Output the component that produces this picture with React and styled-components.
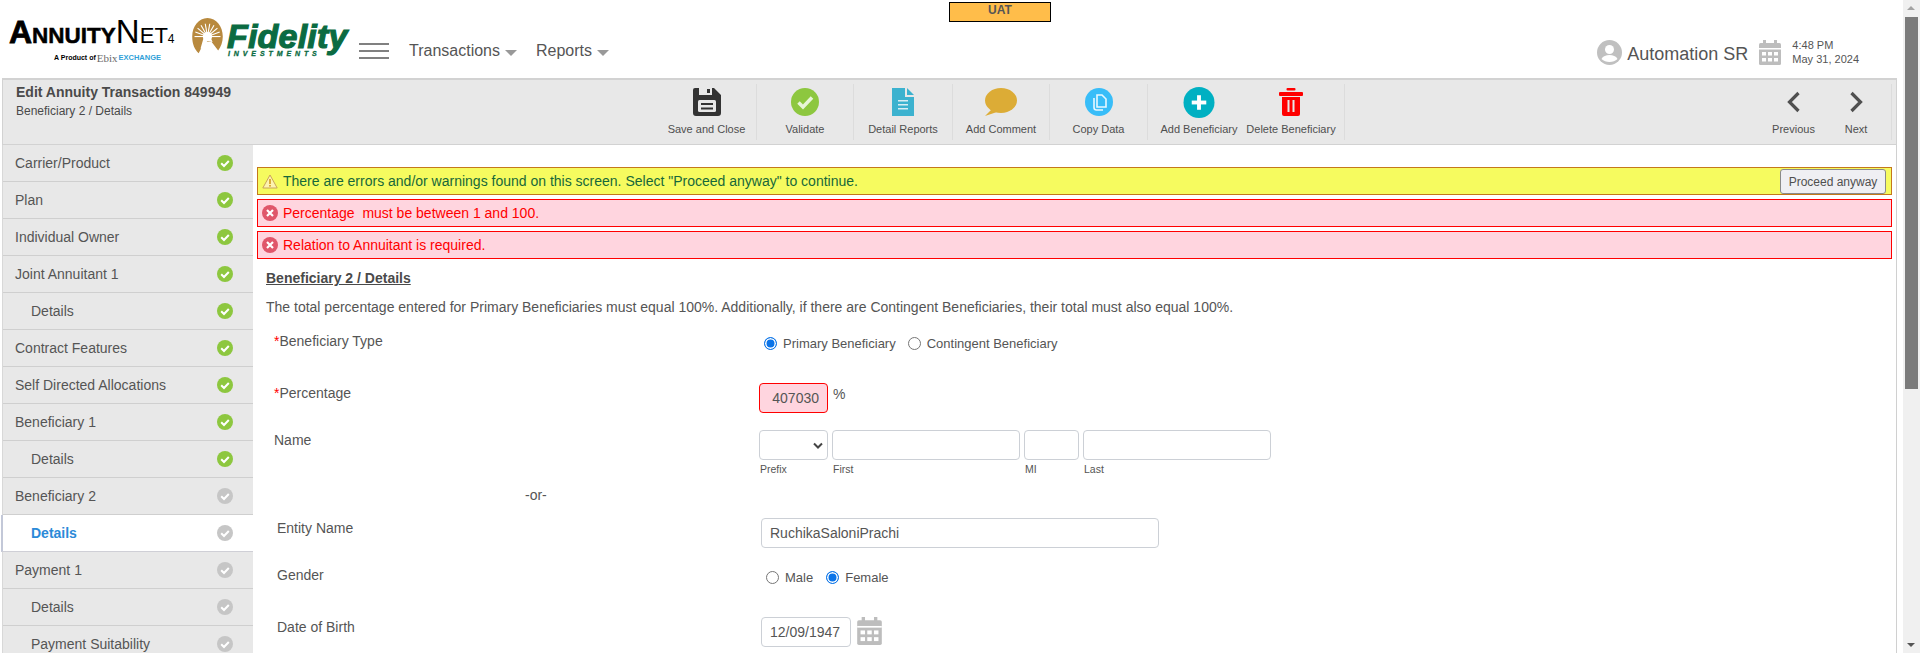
import React from "react";
import styled, { createGlobalStyle } from "styled-components";

const GlobalStyle = createGlobalStyle`
  html, body {
    margin: 0;
    padding: 0;
    background: #fff;
    overflow: hidden;
  }
  body {
    font-family: "Liberation Sans", Arial, sans-serif;
    color: #555;
  }
`;

const Page = styled.div`
  display: flex;
  height: 653px;
  overflow: hidden;
`;

const Main = styled.div`
  width: 1903px;
  flex-shrink: 0;
  display: flex;
  flex-direction: column;
  padding-left: 2px;
  box-sizing: border-box;
`;

const ScrollTrack = styled.div`
  position: relative;
  width: 17px;
  background: #f0f0f0;
`;

const ScrollThumb = styled.div`
  position: absolute;
  left: 2px;
  top: 17px;
  width: 13px;
  height: 372px;
  background: #7b7b7b;
`;

const ScrollArrow = styled.div`
  position: absolute;
  left: 4px;
  ${(p) => (p.$down ? "bottom: 6px;" : "top: 6px;")}
  width: 0;
  height: 0;
  border-left: 4px solid transparent;
  border-right: 4px solid transparent;
  ${(p) => (p.$down ? "border-top: 4px solid #555;" : "border-bottom: 4px solid #a3a3a3;")}
`;

/* header */
const Header = styled.header`
  position: relative;
  height: 78px;
  width: 1895px;
  display: flex;
  align-items: flex-start;
`;

const UatBadge = styled.div`
  position: absolute;
  left: 947px;
  top: 2px;
  width: 100px;
  height: 18px;
  border: 1px solid #000;
  background: #ffbd4a;
  font-size: 12px;
  font-weight: bold;
  line-height: 15px;
  text-align: center;
  color: #555;
`;

const AnnuityLogo = styled.div`
  width: 170px;
  margin: 16px 0 0 7px;
  flex-shrink: 0;
  color: #000;
`;

const AnnuityTitle = styled.div`
  display: flex;
  align-items: baseline;
  height: 31px;
  line-height: 31px;
  white-space: nowrap;
`;

const TitleCap = styled.span`
  font-size: ${(p) => p.$size}px;
  font-weight: ${(p) => p.$weight || 900};
  font-family: ${(p) => (p.$thin ? '"Liberation Sans Narrow", "Liberation Sans", sans-serif' : '"Liberation Sans", sans-serif')};
  letter-spacing: ${(p) => p.$ls || 0}px;
  -webkit-text-stroke: ${(p) => p.$stroke || 0}px #000;
`;

const AnnuitySub = styled.div`
  display: flex;
  align-items: center;
  margin: 4px 0 0 45px;
  gap: 1px;
  font-size: 7px;
  font-weight: bold;
  line-height: 14px;
  white-space: nowrap;
`;

const EbixText = styled.span`
  font-size: 11px;
  font-weight: normal;
  color: #6a6a6a;
  font-family: "Liberation Serif", serif;
`;

const ExchangeText = styled.span`
  font-size: 7.5px;
  font-weight: bold;
  color: #2f9fd8;
`;

const FidelityLogo = styled.div`
  display: flex;
  margin: 18px 0 0 13px;
  width: 161px;
  flex-shrink: 0;
`;

const FidelityText = styled.div`
  margin: 4px 0 0 4px;
  color: #0b6b42;
  font-style: italic;
  font-weight: bold;
  white-space: nowrap;
`;

const FidelityWord = styled.div`
  font-size: 34px;
  line-height: 28px;
  letter-spacing: 0.2px;
  -webkit-text-stroke: 1.2px #0b6b42;
`;

const FidelitySub = styled.div`
  font-size: 7px;
  line-height: 7px;
  letter-spacing: 3.9px;
  margin-left: 1px;
  -webkit-text-stroke: 0.3px #0b6b42;
`;

const Hamburger = styled.div`
  display: flex;
  flex-direction: column;
  gap: 5px;
  width: 30px;
  margin: 43px 0 0 6px;
  flex-shrink: 0;
`;

const HamburgerBar = styled.span`
  height: 2px;
  background: #808080;
`;

const NavMenu = styled.nav`
  display: flex;
  margin: 42px 0 0 20px;
  gap: 19px;
`;

const NavLink = styled.div`
  display: flex;
  align-items: center;
  gap: 5px;
  font-size: 16px;
  line-height: 18px;
  color: #555;
`;

const Caret = styled.span`
  width: 0;
  height: 0;
  margin-top: 3px;
  border-left: 6px solid transparent;
  border-right: 6px solid transparent;
  border-top: 6px solid #999;
`;

const UserArea = styled.div`
  display: flex;
  margin-left: auto;
  padding: 40px 38px 0 0;
  height: 38px;
`;

const UserName = styled.div`
  margin: 3px 0 0 5px;
  font-size: 18px;
  line-height: 22px;
  color: #555;
  white-space: nowrap;
`;

const HeaderCalendar = styled.div`
  margin-left: 11px;
`;

const TimeBlock = styled.div`
  margin: -1px 0 0 11px;
  font-size: 11px;
  line-height: 13.5px;
  color: #555;
  white-space: nowrap;
`;

/* toolbar band */
const TitleBand = styled.div`
  display: flex;
  width: 1895px;
  height: 67px;
  box-sizing: border-box;
  border: 1px solid #d2d2d2;
  border-width: 2px 1px 1px 1px;
  background: #e8e8e8;
`;

const BandTitle = styled.div`
  width: 654px;
  flex-shrink: 0;
  padding: 4px 0 0 13px;
  box-sizing: border-box;
`;

const BandHeading = styled.div`
  font-size: 14px;
  font-weight: bold;
  line-height: 17px;
  color: #4a4a4a;
`;

const BandSub = styled.div`
  margin-top: 3px;
  font-size: 12px;
  line-height: 14px;
  color: #4a4a4a;
`;

const ToolGroup = styled.div`
  display: flex;
  align-self: center;
  height: 56px;
  padding-right: ${(p) => p.$pad || 0}px;
  border-right: 1px solid #dcdcdc;
  ${(p) => p.$end && "margin-left: auto; width: 130px; margin-right: 4px;"}
`;

const ToolButton = styled.div`
  display: flex;
  flex-direction: column;
  align-items: center;
  width: ${(p) => p.$w}px;
  color: #4f4f4f;
`;

const ToolIcon = styled.div`
  height: 28px;
  margin-top: 4px;
  display: flex;
  align-items: center;
  justify-content: center;
`;

const ToolLabel = styled.div`
  margin-top: 6px;
  font-size: 11px;
  line-height: 14px;
  white-space: nowrap;
`;

/* body */
const Body = styled.div`
  display: flex;
  flex: 1;
  min-height: 0;
  width: 1895px;
  border-right: 1px solid #d0d0d0;
  box-sizing: border-box;
`;

const Sidebar = styled.aside`
  width: 251px;
  flex-shrink: 0;
  background: #e8e8e8;
  border-left: 1px solid #d8d8d8;
  box-sizing: border-box;
`;

const SideRow = styled.div`
  display: flex;
  align-items: center;
  justify-content: space-between;
  height: 37px;
  box-sizing: border-box;
  padding: 0 20px 0 ${(p) => (p.$sub ? 28 : 12)}px;
  border-bottom: 1px solid #cfcfcf;
  font-size: 14px;
  color: #555;
  ${(p) =>
    p.$active &&
    `
    margin-left: -2px;
    padding-left: 28px;
    background: #fff;
    color: #2b8ad8;
    font-weight: bold;
    border-left: 2px solid #c3c8d8;
    border-bottom-color: #cfcfd6;
  `}
`;

const Content = styled.main`
  flex: 1;
  min-width: 0;
  padding-left: 4px;
`;

const AlertStack = styled.div`
  display: flex;
  flex-direction: column;
  gap: 4px;
  width: 1635px;
  margin-top: 22px;
`;

const Alert = styled.div`
  display: flex;
  align-items: center;
  justify-content: space-between;
  height: 28px;
  box-sizing: border-box;
  padding: 0 5px 0 4px;
  border: 1px solid ${(p) => (p.$warn ? "#c4781c" : "#f00")};
  background: ${(p) => (p.$warn ? "#f6fb5f" : "#ffd5df")};
  color: ${(p) => (p.$warn ? "#16683a" : "#f00")};
  font-size: 14px;
`;

const AlertMessage = styled.div`
  display: flex;
  align-items: center;
  gap: 5px;
  white-space: pre;
`;

const ProceedButton = styled.button`
  width: 106px;
  height: 25px;
  margin-top: 1px;
  padding: 0;
  border: 1px solid #8a8a8a;
  border-radius: 3px;
  background: #efeff3;
  color: #4f4f4f;
  font-family: "Liberation Sans", sans-serif;
  font-size: 12px;
`;

const SectionHeading = styled.div`
  margin: 9px 0 0 9px;
  font-size: 14px;
  font-weight: bold;
  line-height: 20px;
  text-decoration: underline;
  color: #4a4a4a;
`;

const Intro = styled.div`
  margin: 9px 0 0 9px;
  font-size: 14px;
  line-height: 20px;
  color: #555;
`;

const FormRow = styled.div`
  display: grid;
  grid-template-columns: 485px 1fr;
  height: ${(p) => p.$h}px;
  margin-left: 17px;
  ${(p) => p.$top && `margin-top: ${p.$top}px;`}
`;

const FieldLabel = styled.div`
  padding-left: ${(p) => (p.$entity ? 3 : 0)}px;
  font-size: 14px;
  line-height: 20px;
  color: #555;
`;

const Required = styled.span`
  color: #f00;
`;

const Control = styled.div`
  display: flex;
  align-items: flex-start;
  padding-left: ${(p) => (p.$entity ? 2 : 0)}px;
`;

const RadioGroup = styled.div`
  display: flex;
  align-items: center;
  height: 20px;
  margin: 2px 0 0 5px;
  gap: ${(p) => p.$gap}px;
  font-size: 13px;
  color: #555;
`;

const RadioLabel = styled.label`
  display: flex;
  align-items: center;
  gap: 6px;
`;

const RadioDot = styled.span`
  width: 13px;
  height: 13px;
  box-sizing: border-box;
  border-radius: 50%;
  background: #fff;
  ${(p) =>
    p.$on
      ? `border: 1.5px solid #0b74e8; box-shadow: inset 0 0 0 1.5px #fff; background: #0b74e8;`
      : `border: 1px solid #767676;`}
`;

const TextBox = styled.div`
  width: ${(p) => p.$w}px;
  height: 30px;
  box-sizing: border-box;
  display: flex;
  align-items: center;
  justify-content: ${(p) => (p.$right ? "flex-end" : "flex-start")};
  padding: 0 8px;
  border: 1px solid ${(p) => (p.$error ? "#f00" : "#ccd0d6")};
  border-radius: 4px;
  background: ${(p) => (p.$error ? "#ffd5df" : "#fff")};
  font-size: 14px;
  color: #555;
`;

const Percent = styled.span`
  margin: 1px 0 0 5px;
  font-size: 14px;
  line-height: 20px;
`;

const NameFields = styled.div`
  display: flex;
  gap: 4px;
`;

const NameField = styled.div`
  display: flex;
  flex-direction: column;
`;

const SubLabel = styled.div`
  margin: 3px 0 0 1px;
  font-size: 10.5px;
  line-height: 12px;
  color: #555;
`;

const SelectChevron = styled.svg`
  margin-left: auto;
  margin-right: -4px;
`;

const OrRow = styled.div`
  height: 33px;
  padding-left: 268px;
  font-size: 14px;
  line-height: 20px;
  color: #555;
`;

const CalendarSlot = styled.div`
  margin-left: 6px;
`;

/* drawings */
const CheckBadge = ({ done }) => (
  <svg width="16" height="16" viewBox="0 0 16 16">
    <circle cx="8" cy="8" r="8" fill={done ? "#8dc73f" : "#c6c6c6"} />
    <path d="M4.2 8.2 7 11l4.8-5" fill="none" stroke="#fff" strokeWidth="2" />
  </svg>
);

const CalendarIcon = ({ w, h }) => (
  <svg width={w} height={h} viewBox="0 0 22 25">
    <rect x="4" y="0" width="3" height="5" fill="#bdbdbd" />
    <rect x="15" y="0" width="3" height="5" fill="#bdbdbd" />
    <path d="M1.5 3H20.5Q22 3 22 4.5V23.5Q22 25 20.5 25H1.5Q0 25 0 23.5V4.5Q0 3 1.5 3Z" fill="#bdbdbd" />
    <rect x="0" y="8" width="22" height="1.5" fill="#fff" />
    {[3, 9, 15].map((x) =>
      [12, 18].map((y) => <rect key={x + "-" + y} x={x} y={y} width="4" height="3.5" fill="#fff" />)
    )}
  </svg>
);

const UserIcon = () => (
  <svg width="25" height="25" viewBox="0 0 25 25">
    <circle cx="12.5" cy="12.5" r="12.5" fill="#c0c0c0" />
    <circle cx="12.5" cy="9.5" r="4.5" fill="#fff" />
    <path d="M4.5 19c1.5-3 4.5-4 8-4s6.500 1 8 4c-2 2-5 3-8 3s-6-1-8-3Z" fill="#fff" />
  </svg>
);

const FidelitySun = () => (
  <svg width="31" height="38" viewBox="0 0 33 41">
    <path d="M7 38C2.500 34 0 28 0 20 0 9 7 0 16.500 0S33 9 33 20c0 6-2 11-5 15l-7-9H13Z" fill="#b8893e" />
    <g stroke="#fff" strokeWidth="1.2">
      {[-70, -50, -30, -10, 10, 30, 50, 70, 90, -90].map((a) => (
        <line key={a} x1="16.500" y1="20" x2="16.500" y2="6" transform={`rotate(${a} 16.500 20)`} />
      ))}
    </g>
    <circle cx="16.500" cy="20" r="5" fill="#fff" />
    <path d="M13 19 9 33h5l2-8 6 1-3-7Z" fill="#fff" />
  </svg>
);

const SaveIcon = () => (
  <svg width="28" height="28" viewBox="0 0 28 28">
    <path d="M2 0H6V7H19V0H21L28 7V25Q28 28 25 28H3Q0 28 0 25V2Q0 0 2 0Z" fill="#333" />
    <rect x="14" y="1" width="3" height="4" fill="#333" />
    <rect x="5" y="12" width="18" height="12" rx="1.500" fill="#e8e8e8" />
    <rect x="8" y="15" width="12" height="2" fill="#333" />
    <rect x="8" y="19.500" width="12" height="2" fill="#333" />
  </svg>
);

const ValidateIcon = () => (
  <svg width="28" height="28" viewBox="0 0 28 28">
    <circle cx="14" cy="14" r="14" fill="#8dc73f" />
    <path d="M7.500 14.500 12 19l9-9.500" fill="none" stroke="#e8f5d8" strokeWidth="3.500" />
  </svg>
);

const ReportIcon = () => (
  <svg width="22" height="28" viewBox="0 0 22 28">
    <path d="M0 0H13V9H22V28H0Z" fill="#3cb2cf" />
    <path d="M15 0 22 7H15Z" fill="#3cb2cf" />
    <rect x="6" y="12" width="10" height="1.500" fill="#d8eef4" />
    <rect x="6" y="16" width="10" height="1.500" fill="#d8eef4" />
    <rect x="6" y="20" width="10" height="1.500" fill="#d8eef4" />
  </svg>
);

const CommentIcon = () => (
  <svg width="32" height="28" viewBox="0 0 32 28">
    <ellipse cx="16" cy="12.500" rx="16" ry="12.500" fill="#dcac36" />
    <path d="M8 20 0 28 12 24Z" fill="#dcac36" />
  </svg>
);

const CopyIcon = () => (
  <svg width="28" height="28" viewBox="0 0 28 28">
    <circle cx="14" cy="14" r="14" fill="#38bdf8" />
    <path d="M12 7h5l4 4v8h-9Z" fill="none" stroke="#e8f8ff" strokeWidth="1.600" />
    <path d="M9 10v9.500Q9 22 11.500 22H18" fill="none" stroke="#e8f8ff" strokeWidth="1.600" />
  </svg>
);

const AddIcon = () => (
  <svg width="32" height="31" viewBox="0 0 32 32">
    <circle cx="16" cy="16" r="16" fill="#00b0c2" />
    <rect x="14" y="8.500" width="4" height="15" fill="#fff" />
    <rect x="8.500" y="14" width="15" height="4" fill="#fff" />
  </svg>
);

const TrashIcon = () => (
  <svg width="24" height="28" viewBox="0 0 24 28">
    <rect x="7.500" y="0" width="9" height="2.500" rx="1" fill="#f00" />
    <rect x="0" y="4" width="24" height="4" rx="1" fill="#f00" />
    <path d="M3 9H21V26Q21 28 19 28H5Q3 28 3 26Z" fill="#f00" />
    <rect x="8.500" y="12" width="2" height="12" fill="#e8e8e8" />
    <rect x="13.500" y="12" width="2" height="12" fill="#e8e8e8" />
  </svg>
);

const ArrowIcon = ({ right }) => (
  <svg width="14" height="22" viewBox="0 0 14 22">
    <path
      d={right ? "M2.500 2 11.500 11 2.500 20" : "M11.500 2 2.500 11 11.500 20"}
      fill="none"
      stroke="#4f4f4f"
      strokeWidth="3.200"
    />
  </svg>
);

const WarnIcon = () => (
  <svg width="16" height="15" viewBox="0 0 16 15">
    <path d="M8 1 15.200 14H.8Z" fill="#fdf3b0" stroke="#c9a35a" strokeWidth="1" />
    <rect x="7.200" y="5" width="1.600" height="5" fill="#d39a1e" />
    <rect x="7.200" y="11" width="1.600" height="1.600" fill="#d39a1e" />
  </svg>
);

const ErrorIcon = () => (
  <svg width="16" height="16" viewBox="0 0 16 16">
    <circle cx="8" cy="8" r="8" fill="#e0566a" />
    <path d="M5 5 11 11M11 5 5 11" stroke="#fff" strokeWidth="2.200" />
  </svg>
);

const sideItems = [
  { label: "Carrier/Product", done: true },
  { label: "Plan", done: true },
  { label: "Individual Owner", done: true },
  { label: "Joint Annuitant 1", done: true },
  { label: "Details", sub: true, done: true },
  { label: "Contract Features", done: true },
  { label: "Self Directed Allocations", done: true },
  { label: "Beneficiary 1", done: true },
  { label: "Details", sub: true, done: true },
  { label: "Beneficiary 2" },
  { label: "Details", sub: true, active: true },
  { label: "Payment 1" },
  { label: "Details", sub: true },
  { label: "Payment Suitability", sub: true },
];

const tools = [
  { label: "Save and Close", icon: <SaveIcon />, w: 99 },
  { label: "Validate", icon: <ValidateIcon />, w: 96 },
  { label: "Detail Reports", icon: <ReportIcon />, w: 98 },
  { label: "Add Comment", icon: <CommentIcon />, w: 96 },
  { label: "Copy Data", icon: <CopyIcon />, w: 97 },
];

const App = () => {
  return (
    <>
      <GlobalStyle />
      <Page>
        <Main>
          <Header>
            <UatBadge>UAT</UatBadge>
            <AnnuityLogo>
              <AnnuityTitle>
                <TitleCap $size={32} $stroke={0.8}>A</TitleCap>
                <TitleCap $size={22.5} $stroke={0.5}>NNUITY</TitleCap>
                <TitleCap $size={33} $weight={400} $thin>N</TitleCap>
                <TitleCap $size={22} $weight={400} $thin>ET</TitleCap>
                <TitleCap $size={12} $weight={400} $thin>4</TitleCap>
              </AnnuityTitle>
              <AnnuitySub>
                A Product of <EbixText>Ebix</EbixText>
                <ExchangeText>EXCHANGE</ExchangeText>
              </AnnuitySub>
            </AnnuityLogo>
            <FidelityLogo>
              <FidelitySun />
              <FidelityText>
                <FidelityWord>Fidelity</FidelityWord>
                <FidelitySub>INVESTMENTS</FidelitySub>
              </FidelityText>
            </FidelityLogo>
            <Hamburger>
              <HamburgerBar />
              <HamburgerBar />
              <HamburgerBar />
            </Hamburger>
            <NavMenu>
              <NavLink>
                Transactions <Caret />
              </NavLink>
              <NavLink>
                Reports <Caret />
              </NavLink>
            </NavMenu>
            <UserArea>
              <UserIcon />
              <UserName>Automation SR</UserName>
              <HeaderCalendar>
                <CalendarIcon w={22} h={25} />
              </HeaderCalendar>
              <TimeBlock>
                4:48 PM
                <br />
                May 31, 2024
              </TimeBlock>
            </UserArea>
          </Header>

          <TitleBand>
            <BandTitle>
              <BandHeading>Edit Annuity Transaction 849949</BandHeading>
              <BandSub>Beneficiary 2 / Details</BandSub>
            </BandTitle>
            {tools.map((t) => (
              <ToolGroup key={t.label}>
                <ToolButton $w={t.w}>
                  <ToolIcon>{t.icon}</ToolIcon>
                  <ToolLabel>{t.label}</ToolLabel>
                </ToolButton>
              </ToolGroup>
            ))}
            <ToolGroup $pad={12}>
              <ToolButton $w={102}>
                <ToolIcon>
                  <AddIcon />
                </ToolIcon>
                <ToolLabel>Add Beneficiary</ToolLabel>
              </ToolButton>
              <ToolButton $w={82}>
                <ToolIcon>
                  <TrashIcon />
                </ToolIcon>
                <ToolLabel>Delete Beneficiary</ToolLabel>
              </ToolButton>
            </ToolGroup>
            <ToolGroup $end>
              <ToolButton $w={65}>
                <ToolIcon>
                  <ArrowIcon />
                </ToolIcon>
                <ToolLabel>Previous</ToolLabel>
              </ToolButton>
              <ToolButton $w={60}>
                <ToolIcon>
                  <ArrowIcon right />
                </ToolIcon>
                <ToolLabel>Next</ToolLabel>
              </ToolButton>
            </ToolGroup>
          </TitleBand>

          <Body>
            <Sidebar>
              {sideItems.map((item, i) => (
                <SideRow key={i} $sub={item.sub} $active={item.active}>
                  {item.label}
                  <CheckBadge done={item.done} />
                </SideRow>
              ))}
            </Sidebar>
            <Content>
              <AlertStack>
                <Alert $warn>
                  <AlertMessage>
                    <WarnIcon />
                    There are errors and/or warnings found on this screen. Select "Proceed anyway" to continue.
                  </AlertMessage>
                  <ProceedButton>Proceed anyway</ProceedButton>
                </Alert>
                <Alert>
                  <AlertMessage>
                    <ErrorIcon />
                    {"Percentage  must be between 1 and 100."}
                  </AlertMessage>
                </Alert>
                <Alert>
                  <AlertMessage>
                    <ErrorIcon />
                    Relation to Annuitant is required.
                  </AlertMessage>
                </Alert>
              </AlertStack>

              <SectionHeading>Beneficiary 2 / Details</SectionHeading>
              <Intro>
                The total percentage entered for Primary Beneficiaries must equal 100%. Additionally, if there are
                Contingent Beneficiaries, their total must also equal 100%.
              </Intro>

              <FormRow $h={52} $top={14}>
                <FieldLabel>
                  <Required>*</Required>Beneficiary Type
                </FieldLabel>
                <Control>
                  <RadioGroup $gap={12}>
                    <RadioLabel>
                      <RadioDot $on />
                      Primary Beneficiary
                    </RadioLabel>
                    <RadioLabel>
                      <RadioDot />
                      Contingent Beneficiary
                    </RadioLabel>
                  </RadioGroup>
                </Control>
              </FormRow>

              <FormRow $h={47}>
                <FieldLabel>
                  <Required>*</Required>Percentage
                </FieldLabel>
                <Control>
                  <TextBox $w={69} $error $right>
                    407030
                  </TextBox>
                  <Percent>%</Percent>
                </Control>
              </FormRow>

              <FormRow $h={55}>
                <FieldLabel>Name</FieldLabel>
                <Control>
                  <NameFields>
                    <NameField>
                      <TextBox $w={69}>
                        <SelectChevron width="10" height="7" viewBox="0 0 10 7">
                          <path d="M1 1.500 5 5.500 9 1.500" fill="none" stroke="#444" strokeWidth="2" />
                        </SelectChevron>
                      </TextBox>
                      <SubLabel>Prefix</SubLabel>
                    </NameField>
                    <NameField>
                      <TextBox $w={188} />
                      <SubLabel>First</SubLabel>
                    </NameField>
                    <NameField>
                      <TextBox $w={55} />
                      <SubLabel>MI</SubLabel>
                    </NameField>
                    <NameField>
                      <TextBox $w={188} />
                      <SubLabel>Last</SubLabel>
                    </NameField>
                  </NameFields>
                </Control>
              </FormRow>

              <OrRow>-or-</OrRow>

              <FormRow $h={47}>
                <FieldLabel $entity>Entity Name</FieldLabel>
                <Control $entity>
                  <TextBox $w={398}>RuchikaSaloniPrachi</TextBox>
                </Control>
              </FormRow>

              <FormRow $h={52}>
                <FieldLabel $entity>Gender</FieldLabel>
                <Control $entity>
                  <RadioGroup $gap={13}>
                    <RadioLabel>
                      <RadioDot />
                      Male
                    </RadioLabel>
                    <RadioLabel>
                      <RadioDot $on />
                      Female
                    </RadioLabel>
                  </RadioGroup>
                </Control>
              </FormRow>

              <FormRow $h={40}>
                <FieldLabel $entity>Date of Birth</FieldLabel>
                <Control $entity>
                  <TextBox $w={90}>12/09/1947</TextBox>
                  <CalendarSlot>
                    <CalendarIcon w={25} h={28} />
                  </CalendarSlot>
                </Control>
              </FormRow>
            </Content>
          </Body>
        </Main>
        <ScrollTrack>
          <ScrollArrow />
          <ScrollThumb />
          <ScrollArrow $down />
        </ScrollTrack>
      </Page>
    </>
  );
};

export default App;
